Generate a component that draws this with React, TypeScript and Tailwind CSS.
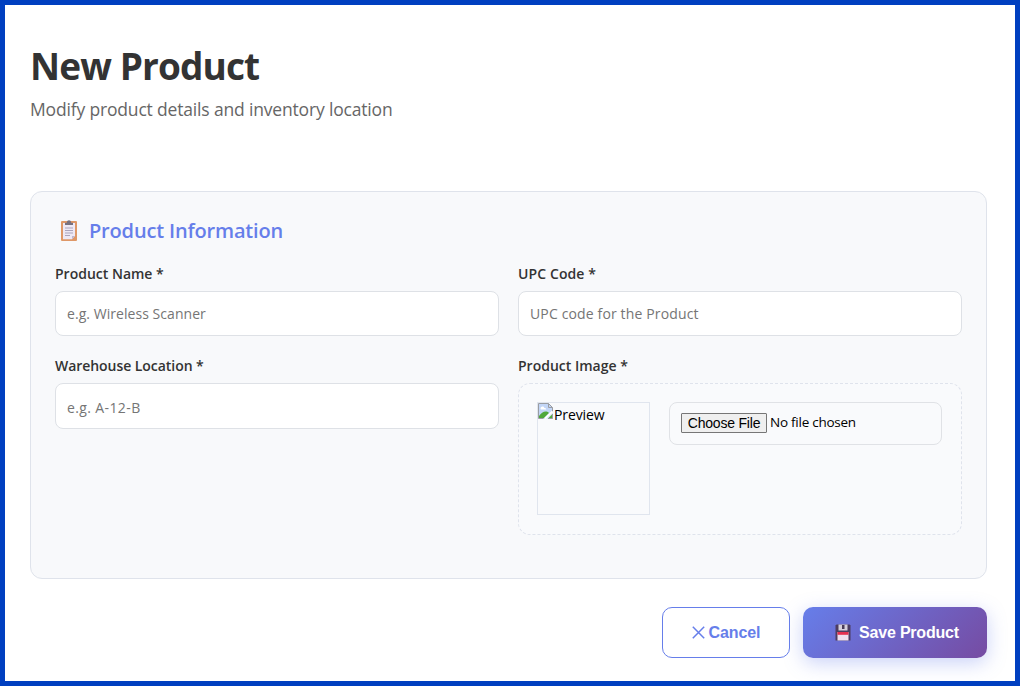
import React, { useState } from "react";

interface TextFieldProps {
  label: string;
  placeholder: string;
  labelClass: string;
  inputClass: string;
}

function TextField({ label, placeholder, labelClass, inputClass }: TextFieldProps) {
  const [value, setValue] = useState("");

  return (
    <label className="block">
      <span className={`block h-5 text-sm font-semibold text-[#333] whitespace-nowrap ${labelClass}`}>{label}</span>
      <input
        type="text"
        value={value}
        onChange={(e) => setValue(e.target.value)}
        placeholder={placeholder}
        className={`block w-full rounded-lg border border-[#dee1e6] bg-white px-[11px] text-sm text-[#333] placeholder:text-[#757575] outline-none ${inputClass}`}
      />
    </label>
  );
}

function ClipboardIcon() {
  return (
    <svg width="18" height="22" viewBox="0 0 18 22" className="shrink-0">
      <rect x="1" y="1" width="16" height="20" rx="1" fill="#df9867" />
      <path d="M3 3h12v13l-3 3.2H3z" fill="#eee9f5" />
      <path d="M15 16h-3v3.2z" fill="#bfb6cf" />
      <path d="M5 2.700h1.8C7 1 7.8.3 9 .3s2 .7 2.2 2.400H13v2.3H5z" fill="#77717f" />
      <path d="M5 8h8M5 10.500h8M5 13h8M5 15.500h5" stroke="#aaa5bd" strokeWidth="1" />
    </svg>
  );
}

function FloppyIcon() {
  return (
    <svg width="16" height="17" viewBox="0 0 16 17" className="shrink-0">
      <path d="M1.5.5h13l1 1v15H.5v-15z" fill="#4c3d60" />
      <rect x="3.5" y=".5" width="9" height="6" fill="#d6d0dc" />
      <rect x="7" y="1" width="2.5" height="4" fill="#493b57" />
      <rect x="2.5" y="8" width="11" height="8.5" fill="#f0dfed" />
      <rect x="2.5" y="8" width="11" height="2.8" fill="#e4304f" />
    </svg>
  );
}

function BrokenImageIcon() {
  return (
    <svg width="16" height="16" viewBox="0 0 16 16" className="shrink-0">
      <path d="M.5.5h10l4 4v6l-5 5h-9z" fill="#c3d6f7" />
      <path d="M2.5 5.5c0-1.3 1-2 2-2 1.2 0 1.7.7 1.9 1.4 1.3 0 1.8.6 1.8 1.6H2.8z" fill="#fff" />
      <path d="M1 15v-2c2-3 5-5 7.5-4.5 1 .2 2 .8 2.5 1.5l-5 5z" fill="#50a83b" />
      <path d="M.5 15.5v-15h10l4 4v4M10.5.5v4h4M.5 15.5h5" fill="none" stroke="#9a9da3" />
      <path d="M14.5 8.5L7 15.5" stroke="#fff" strokeWidth="2" />
      <path d="M14.5 11v4.5H10z" fill="#50a83b" />
      <path d="M14.5 11v4.5H10" fill="none" stroke="#9a9da3" />
    </svg>
  );
}

export default function App() {
  return (
    <div className="h-[686px] w-[1020px] overflow-hidden border-[5px] border-[#003fc0] bg-white pl-[25px] pr-7 font-['Open_Sans','Noto_Sans',sans-serif]">
      {/* Header */}
      <header className="h-[186px] pt-[35px]">
        <h1 className="text-[37px] leading-[52px] font-bold tracking-[-0.88px] text-[#333]">New Product</h1>
        <p className="mt-[5px] text-[17.5px] leading-6 tracking-[-0.17px] text-[#666]">Modify product details and inventory location</p>
      </header>

      {/* Product information */}
      <section className="h-[388px] rounded-xl border border-[#dfe3eb] bg-[#f8f9fb] px-6 pt-6">
        <h2 className="flex h-[30px] items-center gap-[11px] pl-[5px] text-xl leading-[30px] font-semibold text-[#667eea]">
          <ClipboardIcon />
          <span className="tracking-[-0.17px]">Product Information</span>
        </h2>

        <div className="mt-[17px] grid grid-cols-2 gap-x-[19px] gap-y-5">
          <TextField label="Product Name *" placeholder="e.g. Wireless Scanner" labelClass="leading-[22px]" inputClass="mt-2 h-[45px] placeholder:tracking-[0.05px]" />
          <TextField label="UPC Code *" placeholder="UPC code for the Product" labelClass="leading-[22px] tracking-[0.1px]" inputClass="mt-2 h-[45px] placeholder:tracking-[0.14px]" />
          <TextField label="Warehouse Location *" placeholder="e.g. A-12-B" labelClass="leading-5 tracking-[-0.05px]" inputClass="mt-[7px] h-[46px] pt-0.5 placeholder:tracking-[0.38px]" />

          <div>
            <div className="h-5 text-sm leading-5 font-semibold text-[#333]">Product Image *</div>
            <div className="mt-[7px] flex h-[152px] items-start gap-[19px] rounded-xl border border-dashed border-[#dfe3ec] bg-[#f9fafc] pt-[18px] pr-[19px] pl-[18px]">
              <div className="flex size-[113px] shrink-0 border border-[#e0e5ee]">
                <BrokenImageIcon />
                <span className="h-5 text-sm leading-6 tracking-[-0.1px] text-black">Preview</span>
              </div>
              <div className="flex h-[43px] flex-1 items-center rounded-lg border border-[#e0e2e6] px-[11px] pb-0.5 text-sm text-black">
                <button type="button" className="mr-[3px] h-5 w-[86px] rounded-[1px] border border-[#767676] bg-[#efefef] font-['Liberation_Sans',Arial,sans-serif] text-sm leading-[18px] tracking-[-0.2px] whitespace-nowrap">Choose File</button>
                <span className="text-[13.5px] tracking-[-0.25px] whitespace-nowrap">No file chosen</span>
              </div>
            </div>
          </div>
        </div>
      </section>

      {/* Actions */}
      <div className="mt-7 flex justify-end gap-[13px] font-['Liberation_Sans',Arial,sans-serif] text-base font-bold">
        <button type="button" className="flex h-[51px] w-32 items-center justify-center gap-1 rounded-[10px] border border-[#667eea] bg-white text-[#667eea]">
          <svg width="13" height="13" viewBox="0 0 13 13" fill="none" stroke="currentColor" strokeWidth="1.5">
            <path d="M.8.8l11.4 11.4M12.2.8L.8 12.2" />
          </svg>
          <span className="tracking-[-0.1px]">Cancel</span>
        </button>
        <button type="button" className="flex h-[51px] w-[184px] items-center justify-center gap-2 rounded-[10px] bg-[linear-gradient(135deg,#667eea_0%,#764ba2_100%)] pl-1 text-white shadow-[0_5px_19px_rgba(102,126,234,0.35)]">
          <FloppyIcon />
          <span className="tracking-[-0.2px]">Save Product</span>
        </button>
      </div>
    </div>
  );
}
